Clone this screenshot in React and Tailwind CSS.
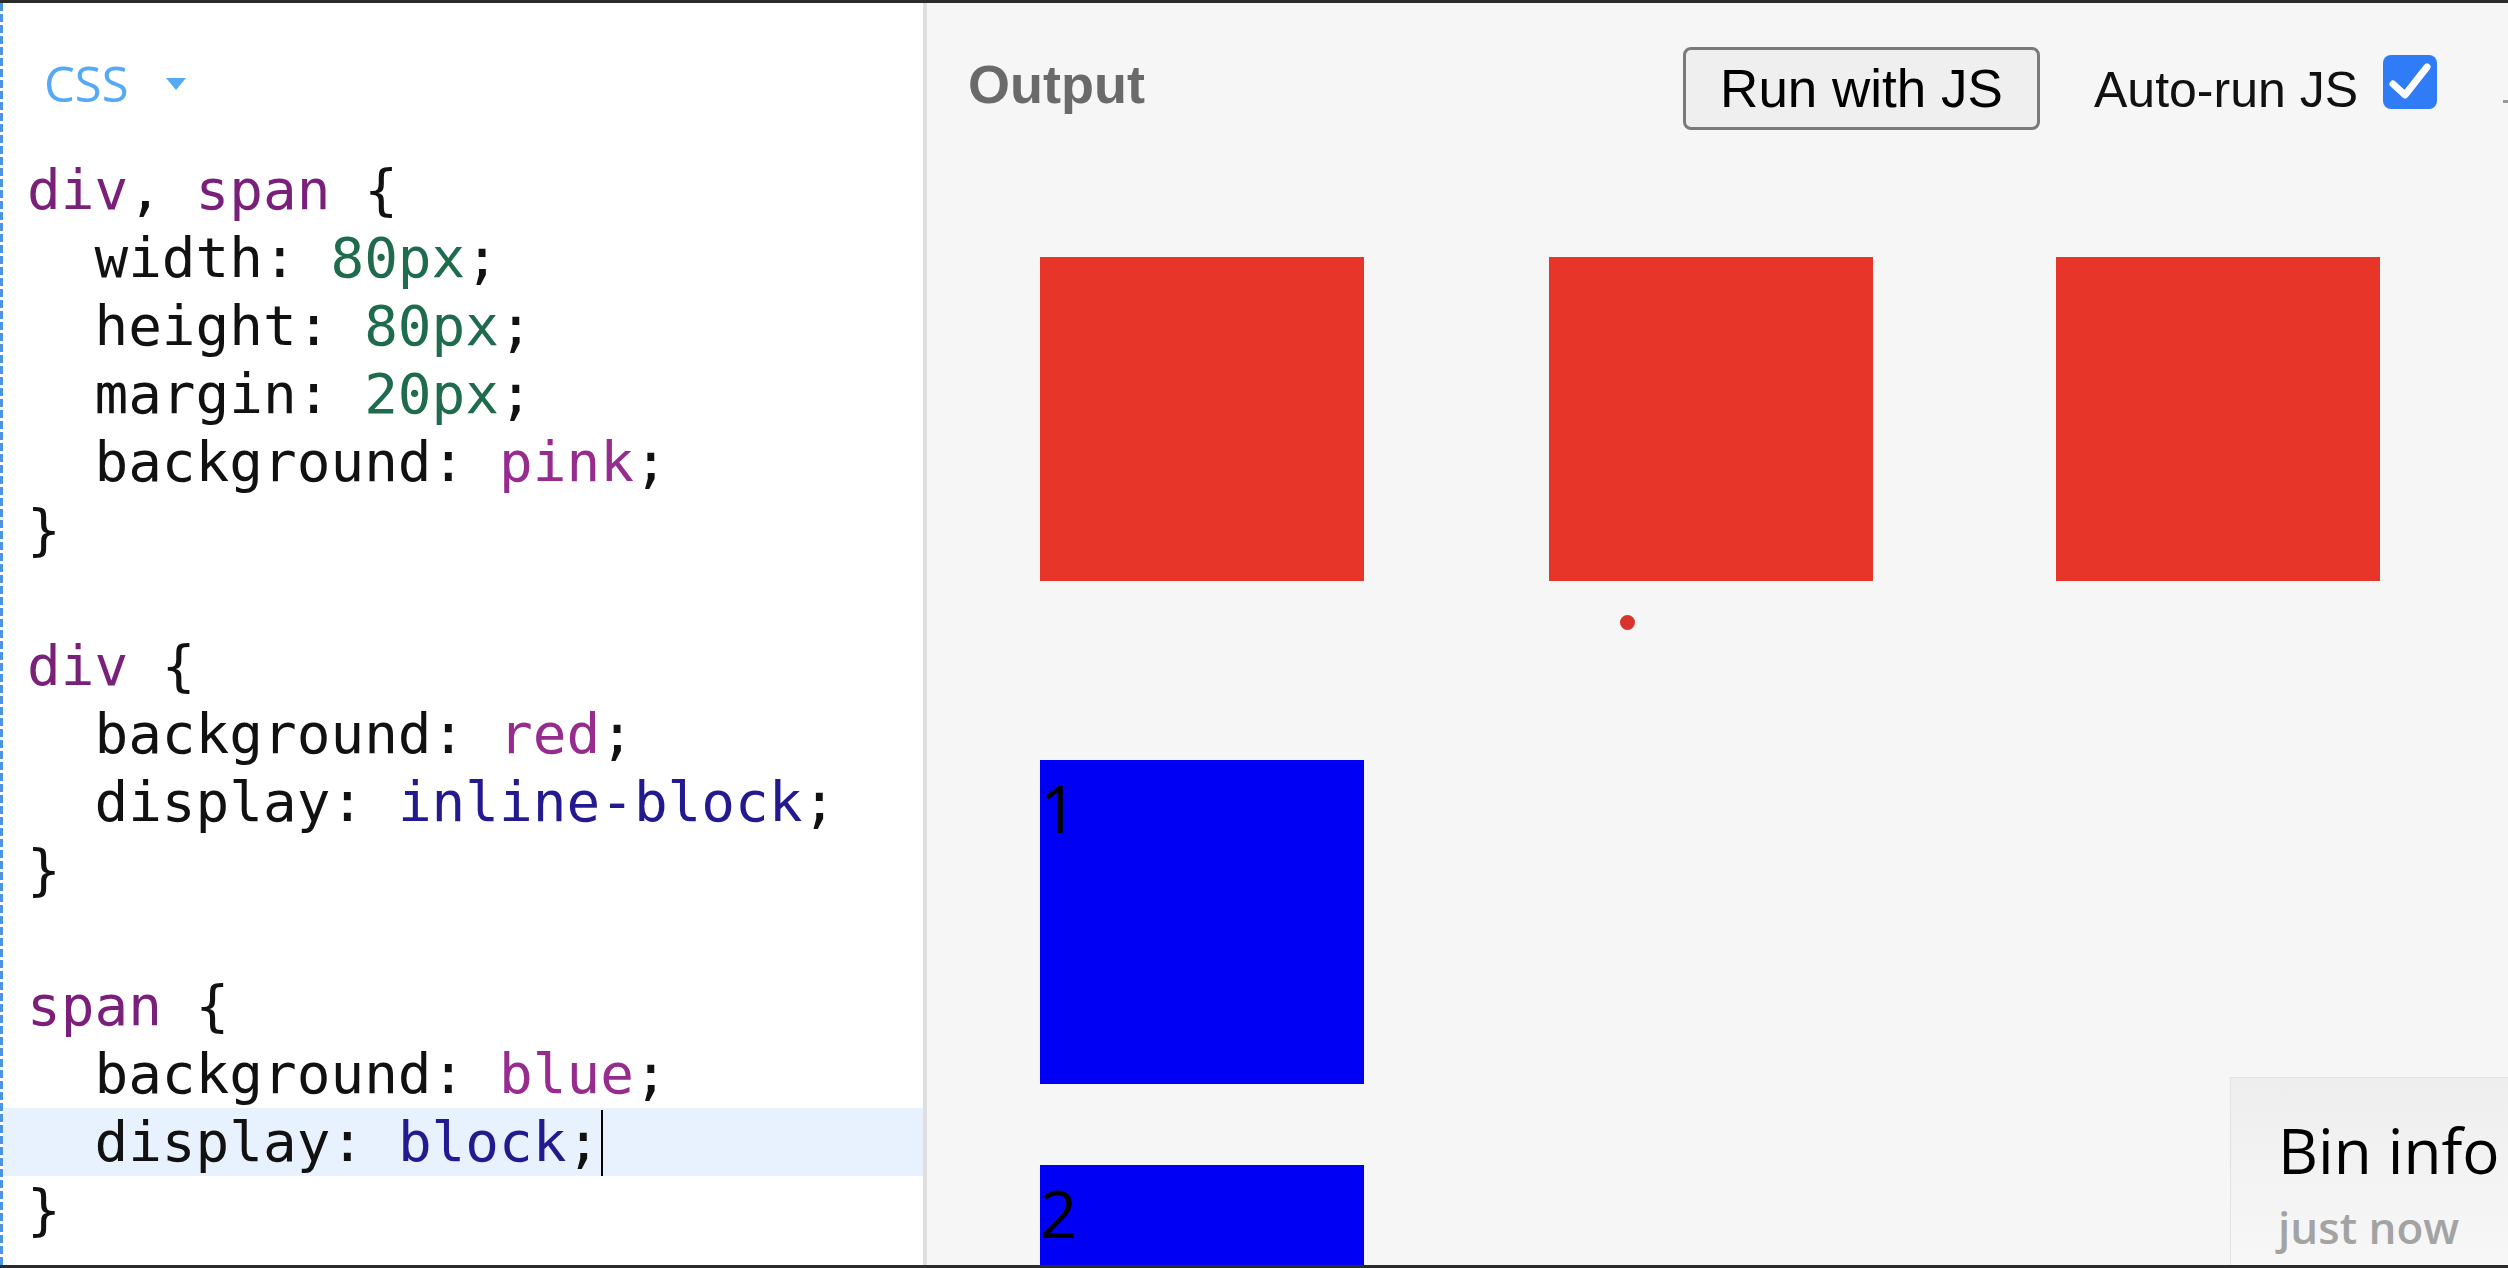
import React from 'react';

const TAG = 'text-[#7a1f7a]';
const VAL = 'text-[#962c8e]';
const NUM = 'text-[#1f6b4d]';
const ATOM = 'text-[#231a8f]';

const codeLines = [
  [['div', TAG], [', '], ['span', TAG], [' {']],
  [['  width: '], ['80px', NUM], [';']],
  [['  height: '], ['80px', NUM], [';']],
  [['  margin: '], ['20px', NUM], [';']],
  [['  background: '], ['pink', VAL], [';']],
  [['}']],
  [],
  [['div', TAG], [' {']],
  [['  background: '], ['red', VAL], [';']],
  [['  display: '], ['inline-block', ATOM], [';']],
  [['}']],
  [],
  [['span', TAG], [' {']],
  [['  background: '], ['blue', VAL], [';']],
  [['  display: '], ['block', ATOM], [';']],
  [['}']],
];

const CodeLine = ({ parts, active }) => (
  <div className={`relative h-[68px] pl-[24px] whitespace-pre ${active ? 'bg-[#e8f2fe]' : ''}`}>
    {parts.map(([text, cls], i) => (
      <span key={i} className={cls || 'text-[#111]'}>{text}</span>
    ))}
    {active && <span className="absolute left-[598px] top-[2px] w-[2px] h-[66px] bg-black" />}
  </div>
);

const Square = ({ color, className = '', children }) => (
  <div className={`w-[324px] h-[324px] shrink-0 ${color} ${className}`}>{children}</div>
);

export default function App() {
  return (
    <div className="w-[2508px] h-[1268px] overflow-hidden flex flex-col bg-white">
      <div className="h-[3px] shrink-0 bg-[#2b2b2b]" />
      <div className="flex flex-1 min-h-0">
        {/* dashed focus edge */}
        <div className="w-[3px] shrink-0 bg-[repeating-linear-gradient(to_bottom,#4a93e6_0px,#4a93e6_8px,transparent_8px,transparent_11px)]" />

        {/* CSS editor */}
        <div className="w-[920px] shrink-0 bg-white flex flex-col">
          <div className="flex items-center pl-[41px] pt-[52px] h-[108px] font-['Open_Sans',sans-serif] text-[49px] leading-[56px] text-[#55a9f5]">
            <span>CSS</span>
            <svg className="ml-[37px] mt-[2px]" width="20" height="12" viewBox="0 0 20 12">
              <polygon points="0,0 20,0 10,12" fill="#55a9f5" />
            </svg>
          </div>
          <div className="mt-[45px] font-['DejaVu_Sans_Mono',monospace] text-[56px] leading-[68px]">
            {codeLines.map((parts, i) => (
              <CodeLine key={i} parts={parts} active={i === 14} />
            ))}
          </div>
        </div>

        <div className="w-[4px] shrink-0 bg-[#dedede]" />

        {/* Output */}
        <div className="flex-1 relative bg-[#f6f6f6] overflow-hidden font-['Liberation_Sans',Arial,sans-serif]">
          <div className="flex items-start pl-[41px] h-[127px]">
            <span className="mt-[54px] text-[54px] leading-[54px] font-bold text-[#6a6a6a]">Output</span>
            <button className="ml-auto mt-[44px] w-[357px] h-[83px] rounded-[8px] border-[3px] border-[#7a7a7a] bg-[#efefef] text-[53px] leading-[53px] text-black">
              Run with JS
            </button>
            <span className="ml-[54px] mt-[62px] w-[268px] whitespace-nowrap text-[50px] leading-[50px] text-[#111]">Auto-run JS</span>
            <div className="ml-[21px] mt-[52px] w-[54px] h-[54px] rounded-[8px] bg-[#2f7cf6] flex items-center justify-center">
              <svg width="54" height="54" viewBox="0 0 54 54">
                <path d="M10 29 L22 40 L44 12" fill="none" stroke="white" strokeWidth="7" strokeLinecap="round" strokeLinejoin="round" />
              </svg>
            </div>
            <div className="ml-[66px] mt-[97px] w-[5px] h-[3px] bg-[#9a9a9a]" />
          </div>

          <div className="flex pl-[113px] mt-[127px]">
            <Square color="bg-[#e8352a]" />
            <Square color="bg-[#e8352a]" className="ml-[185px]" />
            <Square color="bg-[#e8352a]" className="ml-[183px]" />
          </div>

          <div className="pl-[113px] font-['Open_Sans',sans-serif] text-[65px] leading-normal text-black">
            <Square color="bg-[#0000f5]" className="mt-[179px]">1</Square>
            <Square color="bg-[#0000f5]" className="mt-[81px]">2</Square>
          </div>

          <div className="absolute left-[693px] top-[612px] w-[15px] h-[15px] rounded-full bg-[#d9342b]" />

          <div className="absolute left-[1303px] top-[1074px] w-[320px] h-[300px] border border-[#e2e2e2] bg-linear-to-b from-[#eeeeee] to-[#fdfdfd] pl-[47px] pt-[26px] font-['Open_Sans',sans-serif]">
            <div className="text-[62px] leading-normal text-black whitespace-nowrap">Bin info</div>
            <div className="mt-[8px] text-[44px] leading-none font-semibold text-[#a3a3a3] whitespace-nowrap">just now</div>
          </div>
        </div>
      </div>
      <div className="h-[3px] shrink-0 bg-[#2b2b2b]" />
    </div>
  );
}
